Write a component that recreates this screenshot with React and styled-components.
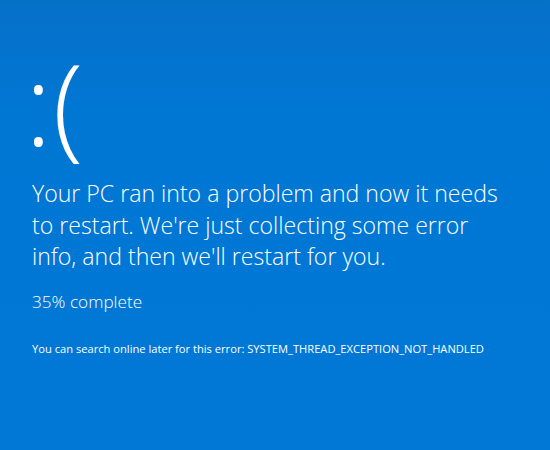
import React from 'react';
import styled, { createGlobalStyle } from 'styled-components';

const GlobalStyle = createGlobalStyle`
  html, body {
    margin: 0;
    padding: 0;
    background: #0178d4;
  }
  body {
    font-family: "Open Sans", "Noto Sans", sans-serif;
    color: #fff;
  }
`;

const Screen = styled.div`
  width: 550px;
  height: 450px;
  box-sizing: border-box;
  padding: 47px 0 0 32px;
  background: linear-gradient(180deg, #0670c9 0%, #0177d4 25%, #0178d6 100%);
  overflow: hidden;
`;

const Frown = styled.div`
  font-size: 112px;
  font-weight: 300;
  line-height: 1;
  letter-spacing: 1px;
  margin-left: -7px;
  height: 131px;
`;

const Message = styled.p`
  margin: 0;
  font-size: 23.1px;
  font-weight: 300;
  line-height: 31.5px;
  width: 475px;
`;

const Progress = styled.p`
  margin: 18px 0 0;
  font-size: 17.2px;
  font-weight: 300;
  line-height: 22px;
`;

const Info = styled.p`
  margin: 28px 0 0;
  font-size: 11.15px;
  font-weight: 400;
  line-height: 16px;
`;

export default function App() {
  return (
    <>
      <GlobalStyle />
      <Screen>
        <Frown>:(</Frown>
        <Message>
          Your PC ran into a problem and now it needs to restart. We're just
          collecting some error info, and then we'll restart for you.
        </Message>
        <Progress>35% complete</Progress>
        <Info>
          You can search online later for this error: SYSTEM_THREAD_EXCEPTION_NOT_HANDLED
        </Info>
      </Screen>
    </>
  );
}
